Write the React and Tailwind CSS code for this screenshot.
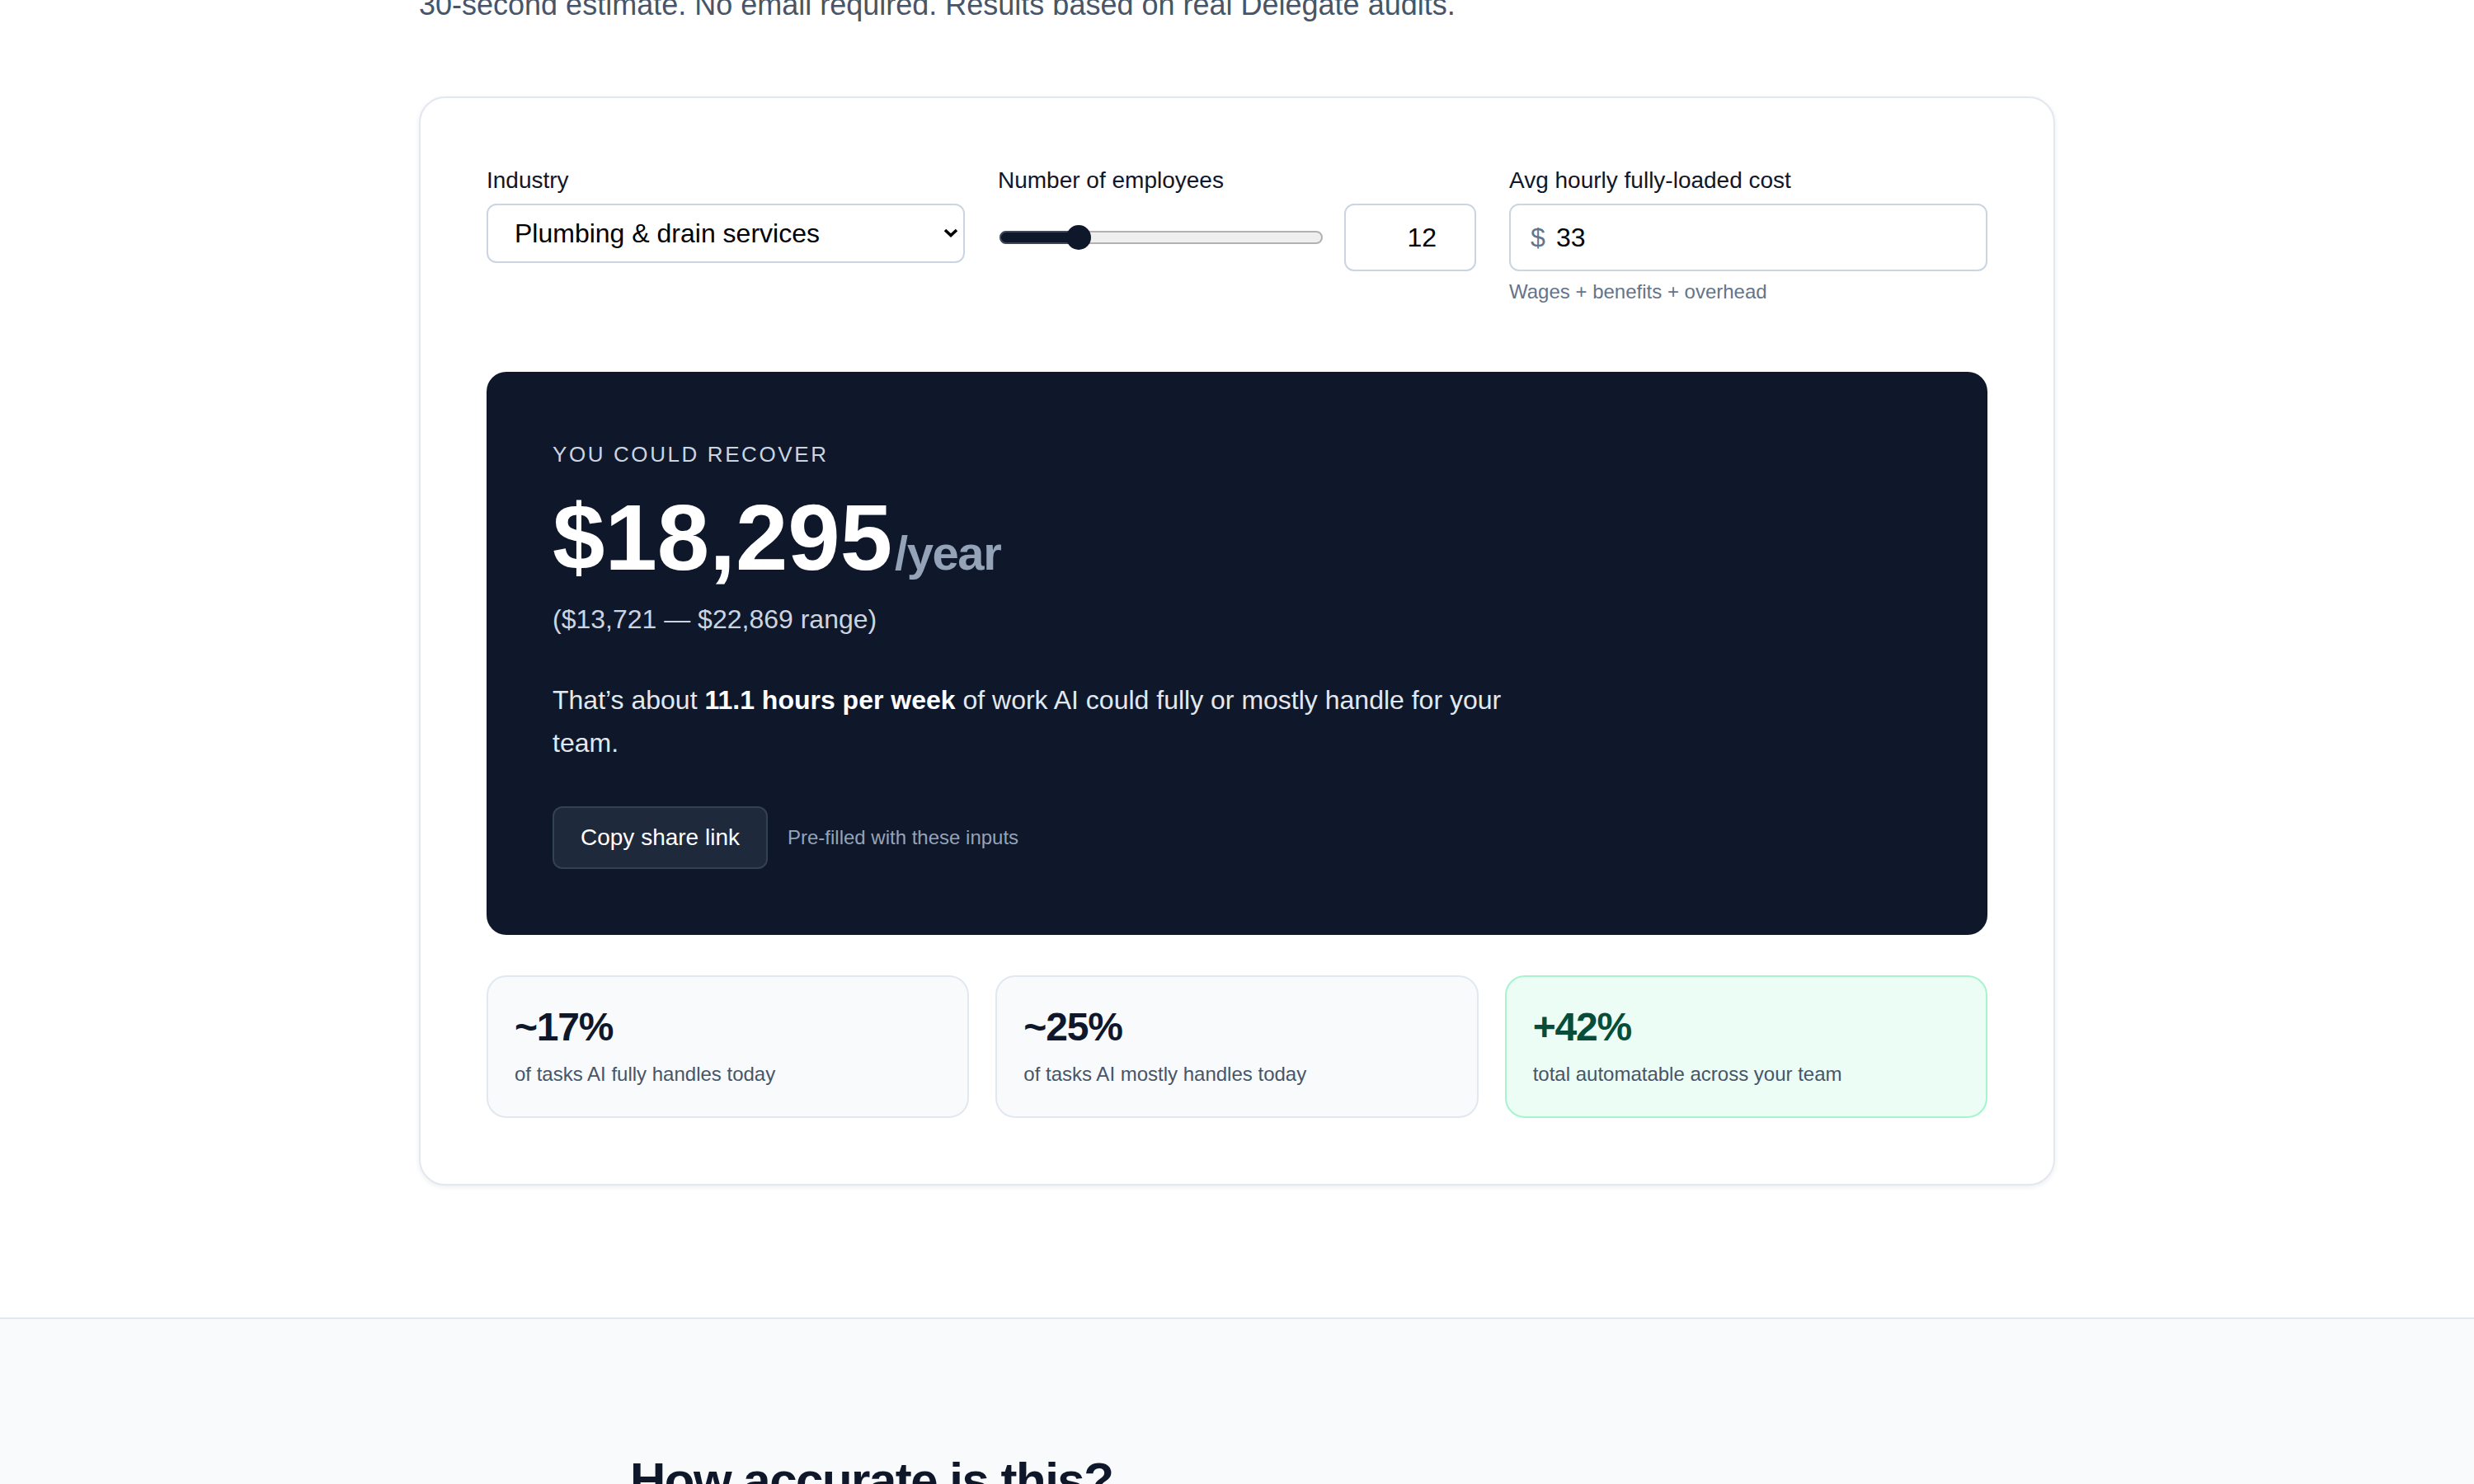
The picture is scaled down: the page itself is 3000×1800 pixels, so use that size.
import React, { useState } from 'react';

const INDUSTRIES = [
  'Plumbing & drain services',
  'HVAC & heating',
  'Electrical contractors',
  'Landscaping',
];

const STATS = [
  { value: '~17%', label: 'of tasks AI fully handles today', tone: 'plain' },
  { value: '~25%', label: 'of tasks AI mostly handles today', tone: 'plain' },
  { value: '+42%', label: 'total automatable across your team', tone: 'good' },
];

function RangeSlider({ value, min, max, onChange }) {
  const pct = (value - min) / (max - min);
  return (
    <div className="relative flex h-[30px] flex-1 items-center px-[2px]">
      <div className="h-[16px] w-full rounded-full border-2 border-[#b2b2b2] bg-[#efefef]" />
      <div
        className="absolute left-[2px] top-[7px] h-[16px] rounded-full border-2 border-[#3f4656] bg-[#0f172a]"
        style={{ width: `calc(${pct} * (100% - 34px) + 16px)` }}
      />
      <div
        className="absolute top-0 h-[30px] w-[30px] rounded-full bg-[#0f172a]"
        style={{ left: `calc(${pct} * (100% - 34px) + 2px)` }}
      />
      <input
        type="range"
        min={min}
        max={max}
        value={value}
        onChange={(e) => onChange(Number(e.target.value))}
        className="absolute inset-0 h-full w-full cursor-pointer opacity-0"
      />
    </div>
  );
}

function StatCard({ value, label, tone }) {
  const good = tone === 'good';
  return (
    <div
      className={`rounded-[24px] border-2 px-8 pt-[31px] pb-[35px] ${
        good ? 'border-[#a7f3d0] bg-[#ecfdf5]' : 'border-[#e2e8f0] bg-[#f8fafc]'
      }`}
    >
      <div className={`text-[48px] font-bold leading-[60px] tracking-tight ${good ? 'text-[#064e3b]' : 'text-[#0f172a]'}`}>
        {value}
      </div>
      <div className="mt-[11px] text-[24px] leading-[32px] text-[#475569]">{label}</div>
    </div>
  );
}

export default function App() {
  const [industry, setIndustry] = useState(INDUSTRIES[0]);
  const [employees, setEmployees] = useState(12);
  const [cost, setCost] = useState(33);

  return (
    <div className="min-h-screen bg-white font-['Liberation_Sans',Arial,sans-serif] text-[#0f172a]">
      <section className="pb-40">
        <div className="mx-auto max-w-[2048px] px-8">
          <p className="-mt-[22px] text-[36px] leading-[56px] text-[#475569]">
            30-second estimate. No email required. Results based on real Delegate audits.
          </p>

          <div className="mt-[83px] rounded-[32px] border-2 border-[#e2e8f0] bg-white p-20 shadow-[0_2px_6px_rgba(15,23,42,0.08)]">
            {/* inputs */}
            <div className="grid grid-cols-3 gap-10">
              <div>
                <label className="mb-2 block text-[28px] leading-[40px]">Industry</label>
                <div className="relative">
                  <select
                    value={industry}
                    onChange={(e) => setIndustry(e.target.value)}
                    className="h-[72px] w-full appearance-none rounded-[12px] border-2 border-[#cbd5e1] bg-white pl-8 pr-12 text-[32px] text-black"
                  >
                    {INDUSTRIES.map((i) => (
                      <option key={i}>{i}</option>
                    ))}
                  </select>
                  <svg
                    className="pointer-events-none absolute right-[8px] top-[30px]"
                    width="18"
                    height="11"
                    viewBox="0 0 18 11"
                    fill="none"
                    stroke="#000"
                    strokeWidth="3.6"
                  >
                    <polyline points="2,2 9,8.5 16,2" />
                  </svg>
                </div>
              </div>

              <div>
                <label className="mb-2 block text-[28px] leading-[40px]">Number of employees</label>
                <div className="flex items-center gap-6">
                  <RangeSlider value={employees} min={1} max={50} onChange={setEmployees} />
                  <input
                    type="number"
                    value={employees}
                    onChange={(e) => setEmployees(Number(e.target.value))}
                    className="h-[82px] w-[160px] appearance-none rounded-[12px] border-2 border-[#cbd5e1] bg-white pr-[46px] text-right text-[32px] text-black [appearance:textfield] [&::-webkit-inner-spin-button]:appearance-none"
                  />
                </div>
              </div>

              <div>
                <label className="mb-2 block text-[28px] leading-[40px]">Avg hourly fully-loaded cost</label>
                <div className="relative">
                  <span className="pointer-events-none absolute left-[26px] top-[19px] text-[32px] leading-[44px] text-[#64748b]">$</span>
                  <input
                    type="number"
                    value={cost}
                    onChange={(e) => setCost(Number(e.target.value))}
                    className="h-[82px] w-full rounded-[12px] border-2 border-[#cbd5e1] bg-white pl-[55px] text-[32px] text-black [appearance:textfield] [&::-webkit-inner-spin-button]:appearance-none"
                  />
                </div>
                <p className="mt-[9px] text-[24px] leading-[32px] text-[#64748b]">Wages + benefits + overhead</p>
              </div>
            </div>

            {/* result */}
            <div className="mt-[81px] rounded-[24px] bg-[#0f172a] p-20">
              <div className="text-[26px] uppercase leading-[40px] tracking-[0.1em] text-[#cbd5e1]">You could recover</div>
              <div className="mt-[24px] flex items-baseline">
                <span className="text-[114px] font-bold leading-none text-white">$18,295</span>
                <span className="ml-[3px] text-[58px] font-bold leading-none tracking-tight text-[#94a3b8]">/year</span>
              </div>
              <div className="mt-[18px] text-[32px] leading-[48px] text-[#cbd5e1]">($13,721 — $22,869 range)</div>
              <p className="mt-12 max-w-[1152px] text-[32px] leading-[52px] text-[#e2e8f0]">
                That’s about <strong className="font-semibold text-white">11.1 hours per week</strong> of work AI could
                fully or mostly handle for your team.
              </p>
              <div className="mt-[51px] flex items-center gap-6">
                <button className="rounded-[12px] border-2 border-[#334155] bg-[#1e293b] px-8 py-4 text-[28px] leading-[40px] text-white">
                  Copy share link
                </button>
                <span className="text-[24px] leading-[32px] text-[#94a3b8]">Pre-filled with these inputs</span>
              </div>
            </div>

            {/* breakdown */}
            <div className="mt-[49px] grid grid-cols-3 gap-8">
              {STATS.map((s) => (
                <StatCard key={s.value} {...s} />
              ))}
            </div>
          </div>
        </div>
      </section>

      <section className="border-t-2 border-[#e2e8f0] bg-[#f8fafc] pt-40 pb-40">
        <div className="mx-auto max-w-[1536px] px-8">
          <h2 className="text-[60px] font-bold leading-[72px] tracking-tight text-[#0f172a]">How accurate is this?</h2>
        </div>
      </section>
    </div>
  );
}
